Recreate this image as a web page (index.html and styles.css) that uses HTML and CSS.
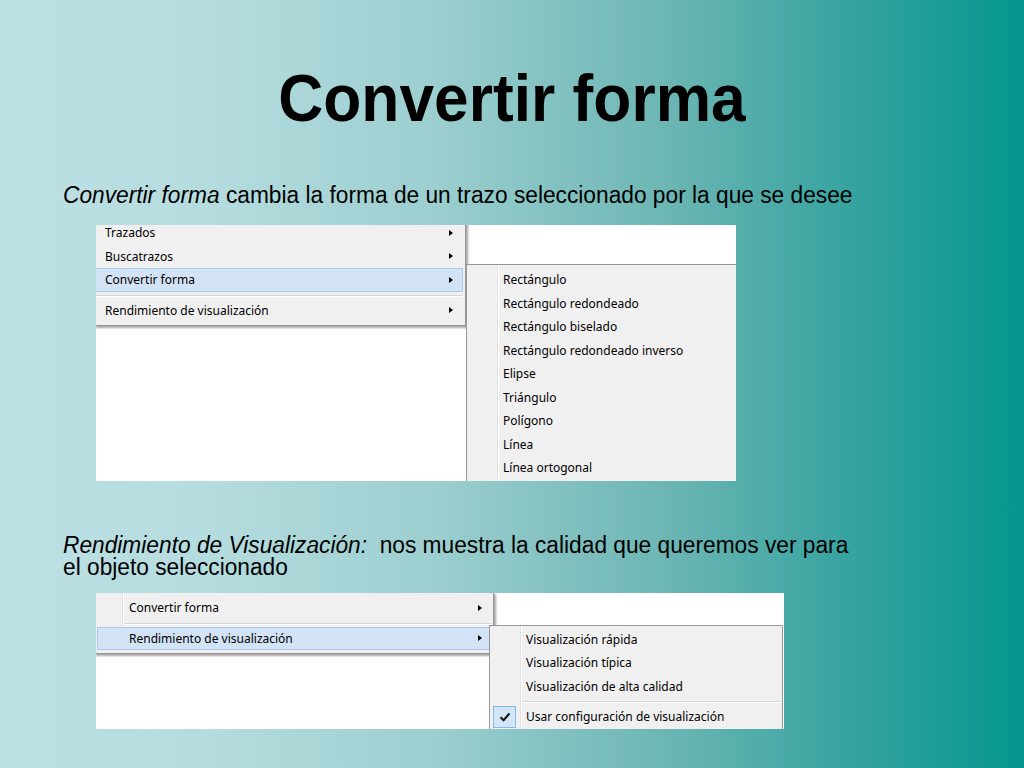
FILE: index.html
```html
<!DOCTYPE html>
<html lang="es">
<head>
<meta charset="utf-8">
<title>Convertir forma</title>
<link rel="stylesheet" href="styles.css">
</head>
<body>
<div class="slide">
  <h1 class="title">Convertir forma</h1>
  <p class="text lead"><em>Convertir forma</em> cambia la forma de un trazo seleccionado por la que se desee</p>

  <div class="shot shot1">
    <div class="menu main1">
      <div class="item"><span>Trazados</span><i class="arrow"></i></div>
      <div class="item"><span>Buscatrazos</span><i class="arrow"></i></div>
      <div class="item hl"><span>Convertir forma</span><i class="arrow"></i></div>
      <div class="sep"></div>
      <div class="item"><span>Rendimiento de visualización</span><i class="arrow"></i></div>
    </div>
    <div class="menu sub sub1">
      <div class="item"><span>Rectángulo</span></div>
      <div class="item"><span>Rectángulo redondeado</span></div>
      <div class="item"><span>Rectángulo biselado</span></div>
      <div class="item"><span>Rectángulo redondeado inverso</span></div>
      <div class="item"><span>Elipse</span></div>
      <div class="item"><span>Triángulo</span></div>
      <div class="item"><span>Polígono</span></div>
      <div class="item"><span>Línea</span></div>
      <div class="item"><span>Línea ortogonal</span></div>
    </div>
  </div>

  <div class="text second">
    <div class="line"><em>Rendimiento de Visualización:</em>&nbsp; nos muestra la calidad que queremos ver para</div>
    <div class="line">el objeto seleccionado</div>
  </div>

  <div class="shot shot2">
    <div class="menu main2">
      <div class="item"><span>Convertir forma</span><i class="arrow"></i></div>
      <div class="sep"></div>
      <div class="item hl"><span>Rendimiento de visualización</span><i class="arrow"></i></div>
    </div>
    <div class="menu sub sub2">
      <div class="item"><span>Visualización rápida</span></div>
      <div class="item"><span>Visualización típica</span></div>
      <div class="item"><span>Visualización de alta calidad</span></div>
      <div class="sep"></div>
      <div class="item checked">
        <b class="check"><svg width="12" height="10" viewBox="0 0 12 10"><path d="M1.5 5.2 L4.6 8.2 L10.5 1.5" fill="none" stroke="#1b1b1b" stroke-width="2.2"/></svg></b>
        <span>Usar configuración de visualización</span>
      </div>
    </div>
  </div>
</div>
</body>
</html>
```

FILE: styles.css
```css
html, body {
  margin: 0;
  padding: 0;
}
body {
  width: 1024px;
  height: 768px;
  overflow: hidden;
  background: linear-gradient(90deg, #bde0e4 0%, #b5dcdf 20%, #9dcfd0 42%, #6cb6b4 65%, #33a29e 84%, #04968f 100%);
  font-family: "Liberation Sans", Arial, sans-serif;
  color: #000;
}
.slide {
  width: 1024px;
  height: 768px;
  overflow: hidden;
}
.title {
  margin: 58px 0 0;
  font-size: 67px;
  line-height: 80px;
  font-weight: bold;
  text-align: center;
  transform: scaleX(0.93);
  transform-origin: 512px 0;
}
.text {
  margin: 0 0 0 63px;
  font-size: 23.5px;
  line-height: 22px;
  white-space: nowrap;
  transform: scaleX(0.967);
  transform-origin: 0 0;
}
.text em {
  font-style: italic;
}
.lead {
  margin-top: 45px;
  line-height: 24px;
}
.second {
  margin-top: 53px;
}
.second .line {
  height: 22px;
  line-height: 22px;
}
.shot {
  position: relative;
  margin-left: 96px;
  background: #fff;
  overflow: hidden;
  font-family: "Segoe UI", "Noto Sans", "Open Sans", sans-serif;
  font-size: 12px;
  color: #000;
}
.shot1 {
  margin-top: 18px;
  width: 640px;
  height: 256px;
}
.shot2 {
  margin-top: 15px;
  width: 688px;
  height: 136px;
}
.menu {
  position: absolute;
  box-sizing: border-box;
  background: #f0f0f0;
  border: 1px solid #979797;
  padding: 3px 2px;
  box-shadow: 2px 2px 2px rgba(0, 0, 0, 0.35);
}
.item {
  position: relative;
  display: flex;
  align-items: center;
  justify-content: space-between;
  height: 23.5px;
  box-sizing: border-box;
  border: 1px solid transparent;
}
.item span {
  white-space: nowrap;
}
.item.hl {
  background: #d1e3f5;
  border-color: #a9caee;
}
.arrow {
  display: block;
  width: 0;
  height: 0;
  border-left: 4px solid #000;
  border-top: 3.5px solid transparent;
  border-bottom: 3.5px solid transparent;
}
.sep {
  height: 7px;
  position: relative;
}
.sep::after {
  content: "";
  position: absolute;
  left: 0;
  right: 0;
  top: 3px;
  border-top: 1px solid #d7d7d7;
  border-bottom: 1px solid #fff;
}

/* first screenshot */
.main1 {
  left: -2px;
  top: -8px;
  width: 372px;
  padding-left: 0;
}
.main1 .item {
  padding: 0 9px 0 9px;
}
.sub1 {
  left: 370px;
  top: 39px;
  width: 272px;
  height: 240px;
  box-shadow: none;
}

/* submenu gutter */
.sub::before {
  content: "";
  position: absolute;
  left: 30px;
  top: 0;
  bottom: 0;
  border-left: 1px solid #e2e2e2;
  border-right: 1px solid #fff;
}
.sub .item {
  padding-left: 33px;
  justify-content: flex-start;
}
.sub .sep::after {
  left: 30px;
}

/* second screenshot */
.main2 {
  left: -2px;
  top: -1px;
  width: 400px;
}
.main2::before {
  content: "";
  position: absolute;
  left: 27px;
  top: 0;
  bottom: 0;
  border-left: 1px solid #e2e2e2;
  border-right: 1px solid #fff;
}
.main2 .item {
  padding: 0 8px 0 31px;
}
.main2 .sep::after {
  left: 28px;
}
.sub2 {
  left: 393px;
  top: 32px;
  width: 294px;
  height: 120px;
  padding-top: 1.5px;
  box-shadow: none;
}
.check {
  position: absolute;
  left: 0;
  top: 0;
  width: 23px;
  height: 22px;
  box-sizing: border-box;
  background: #d3e6f8;
  border: 1px solid #84b8ea;
  display: flex;
  align-items: center;
  justify-content: center;
}
```
